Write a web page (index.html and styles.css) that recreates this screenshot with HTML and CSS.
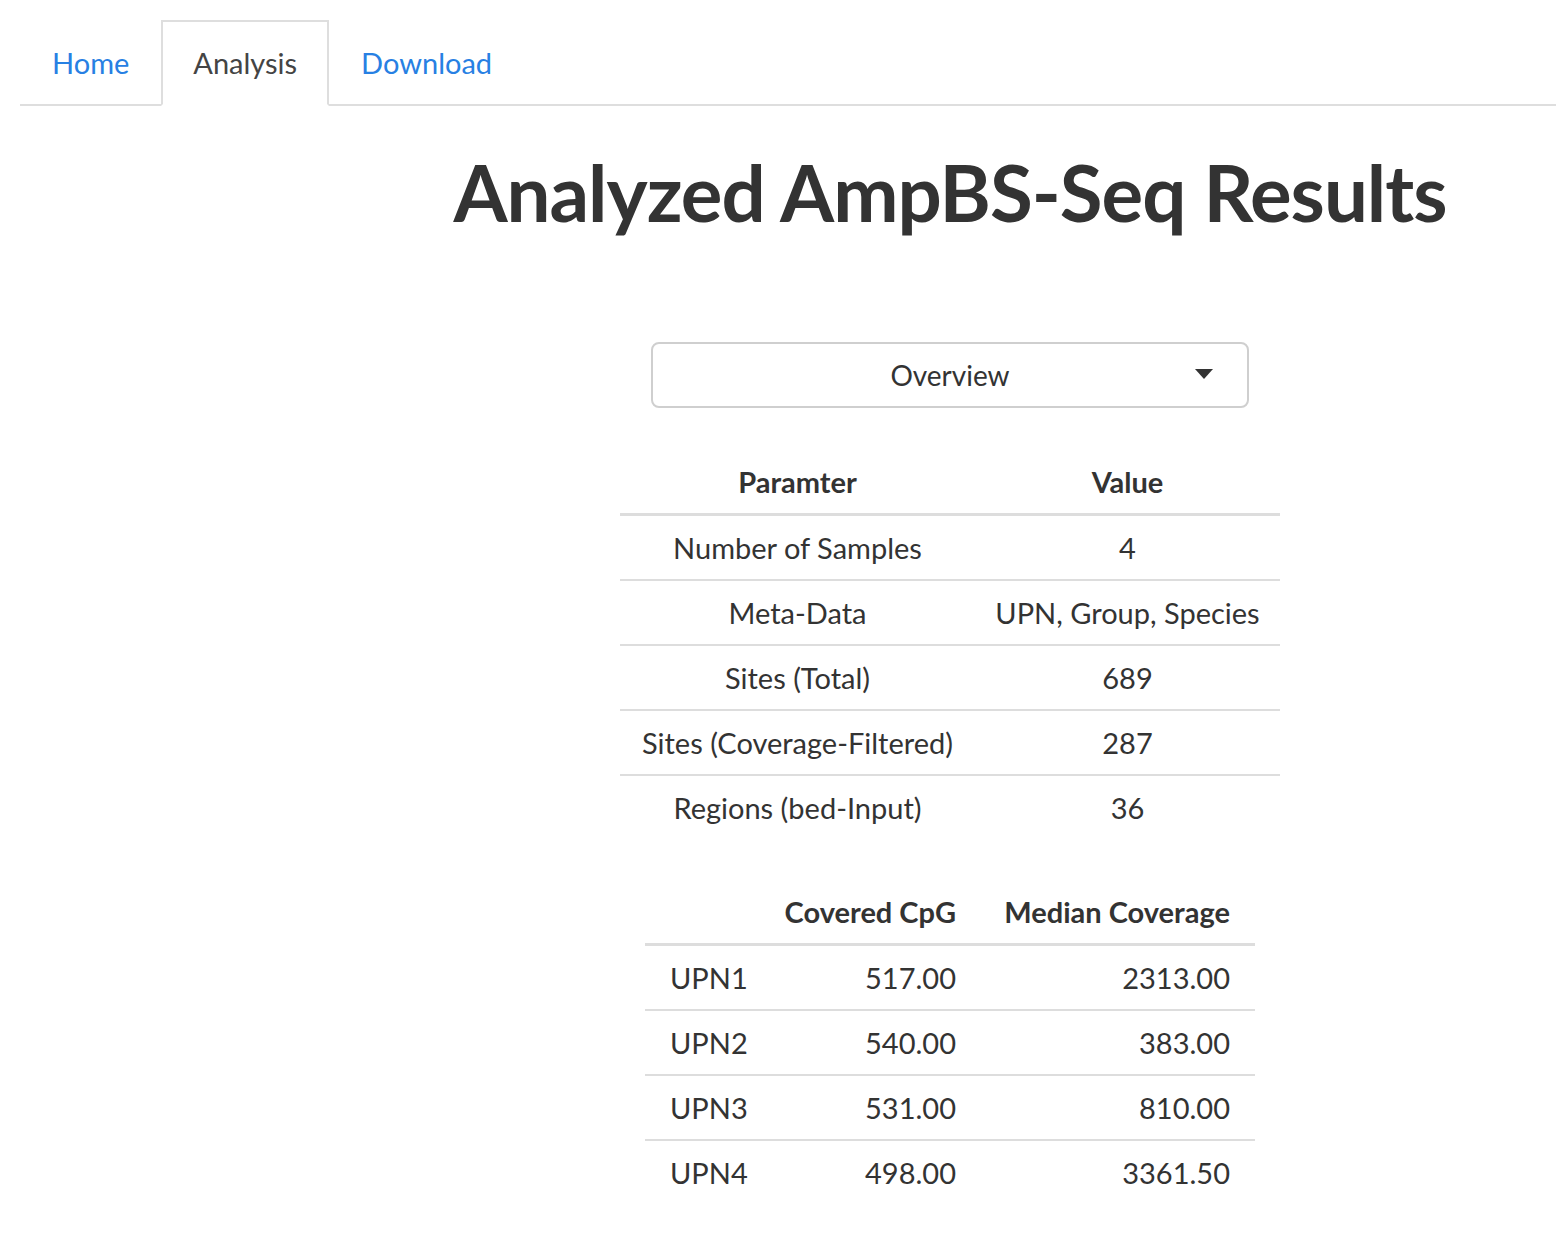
FILE: index.html
```html
<!DOCTYPE html>
<html lang="en">
<head>
<meta charset="utf-8">
<title>Analyzed AmpBS-Seq Results</title>
<link rel="stylesheet" href="styles.css">
</head>
<body>
<div class="page">
  <ul class="tabs">
    <li class="tab"><a href="#">Home</a></li>
    <li class="tab active"><a href="#">Analysis</a></li>
    <li class="tab"><a href="#">Download</a></li>
  </ul>
  <div class="layout">
    <div class="side"></div>
    <main class="main">
      <h1 class="title">Analyzed AmpBS-Seq Results</h1>
      <div class="select">
        <span class="select-label">Overview</span>
        <span class="caret"></span>
      </div>
      <table class="tbl tbl-overview">
        <colgroup><col class="c1"><col class="c2"></colgroup>
        <thead>
          <tr><th>Paramter</th><th>Value</th></tr>
        </thead>
        <tbody>
          <tr><td>Number of Samples</td><td>4</td></tr>
          <tr><td>Meta-Data</td><td>UPN, Group, Species</td></tr>
          <tr><td>Sites (Total)</td><td>689</td></tr>
          <tr><td>Sites (Coverage-Filtered)</td><td>287</td></tr>
          <tr><td>Regions (bed-Input)</td><td>36</td></tr>
        </tbody>
      </table>
      <table class="tbl tbl-samples">
        <colgroup><col class="s1"><col class="s2"><col class="s3"></colgroup>
        <thead>
          <tr><th class="l"></th><th class="r">Covered CpG</th><th class="r">Median Coverage</th></tr>
        </thead>
        <tbody>
          <tr><td class="l">UPN1</td><td class="r">517.00</td><td class="r">2313.00</td></tr>
          <tr><td class="l">UPN2</td><td class="r">540.00</td><td class="r">383.00</td></tr>
          <tr><td class="l">UPN3</td><td class="r">531.00</td><td class="r">810.00</td></tr>
          <tr><td class="l">UPN4</td><td class="r">498.00</td><td class="r">3361.50</td></tr>
        </tbody>
      </table>
    </main>
  </div>
</div>
</body>
</html>
```
FILE: styles.css
```css
* { box-sizing: border-box; }
html, body { margin: 0; padding: 0; background: #fff; }
body {
  font-family: Lato, "Open Sans", "Liberation Sans", sans-serif;
  color: #333;
  font-size: 29px;
}
.page { padding: 20px 0 40px 20px; }

.tabs {
  list-style: none;
  margin: 0;
  padding: 0;
  display: flex;
  border-bottom: 2px solid #dedede;
  height: 86px;
}
.tab {
  margin-bottom: -2px;
  border: 2px solid transparent;
  display: flex;
  align-items: center;
  padding: 0 30px;
  height: 86px;
}
.tab a { color: #2780e3; text-decoration: none; line-height: 1; font-size: 29px; margin-top: -2px; }
.tab.active { border-color: #dedede; border-bottom-color: #fff; background: #fff; }
.tab.active a { color: #444; }

.layout { display: flex; }
.side { width: 324px; flex: none; }
.main { flex: 1; display: flex; flex-direction: column; align-items: center; }

.title {
  margin: 40px 0 0;
  font-size: 78px;
  font-weight: 700;
  line-height: 1.2;
  color: #333;
  letter-spacing: -1px;
  white-space: nowrap;
}

.select {
  margin-top: 102px;
  width: 598px;
  height: 66px;
  border: 2px solid #cfcfcf;
  border-radius: 8px;
  display: flex;
  align-items: center;
  justify-content: center;
  position: relative;
}
.select-label { font-size: 28px; color: #333; }
.caret {
  position: absolute;
  right: 34px;
  top: 25px;
  width: 0; height: 0;
  border-left: 9px solid transparent;
  border-right: 9px solid transparent;
  border-top: 10px solid #333;
}

.tbl {
  border-collapse: collapse;
  table-layout: fixed;
  color: #333;
}
.tbl th, .tbl td {
  height: 65px;
  padding: 0 10px;
  font-size: 29px;
  vertical-align: middle;
  text-align: center;
  white-space: nowrap;
}
.tbl th { font-weight: 700; border-bottom: 3px solid #ddd; }
.tbl tbody tr + tr td { border-top: 2px solid #ddd; }

.tbl-overview { margin-top: 42px; width: 660px; }
.tbl-overview .c1 { width: 355px; }
.tbl-overview .c2 { width: 305px; }

.tbl-samples { margin-top: 40px; width: 610px; }
.tbl-samples .s1 { width: 119px; }
.tbl-samples .s2 { width: 217px; }
.tbl-samples .s3 { width: 274px; }
.tbl .l { text-align: left; padding-left: 25px; padding-right: 5px; }
.tbl .r { text-align: right; padding-right: 25px; padding-left: 5px; }
```
